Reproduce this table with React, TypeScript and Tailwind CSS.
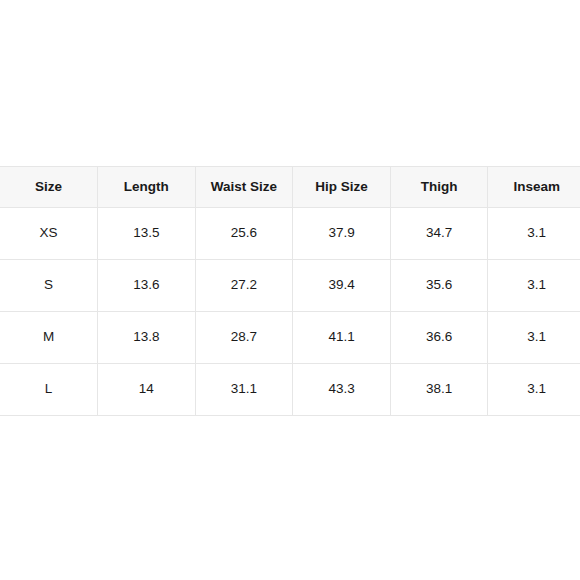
import React from 'react'

const headers = ['Size', 'Length', 'Waist Size', 'Hip Size', 'Thigh', 'Inseam']

const rows = [
  ['XS', '13.5', '25.6', '37.9', '34.7', '3.1'],
  ['S', '13.6', '27.2', '39.4', '35.6', '3.1'],
  ['M', '13.8', '28.7', '41.1', '36.6', '3.1'],
  ['L', '14', '31.1', '43.3', '38.1', '3.1'],
]

const App = () => {
  return (
    <div
      className="w-[580px] h-[580px] bg-white overflow-hidden pt-[166px]"
      style={{ fontFamily: '"Liberation Sans", Arial, sans-serif' }}
    >
      <table className="w-[586px] border-collapse table-fixed text-[13.5px] text-[#1a1a1a]">
        <thead>
          <tr className="bg-[#f7f7f7] h-[41px]">
            {headers.map((h) => (
              <th
                key={h}
                className="border border-[#e6e6e6] font-bold text-center first:border-l-0"
              >
                {h}
              </th>
            ))}
          </tr>
        </thead>
        <tbody>
          {rows.map((row) => (
            <tr className="h-[52px]" key={row[0]}>
              {row.map((cell, i) => (
                <td
                  key={i}
                  className="border border-[#e6e6e6] text-center font-normal first:border-l-0"
                >
                  {cell}
                </td>
              ))}
            </tr>
          ))}
        </tbody>
      </table>
    </div>
  )
}

export default App
